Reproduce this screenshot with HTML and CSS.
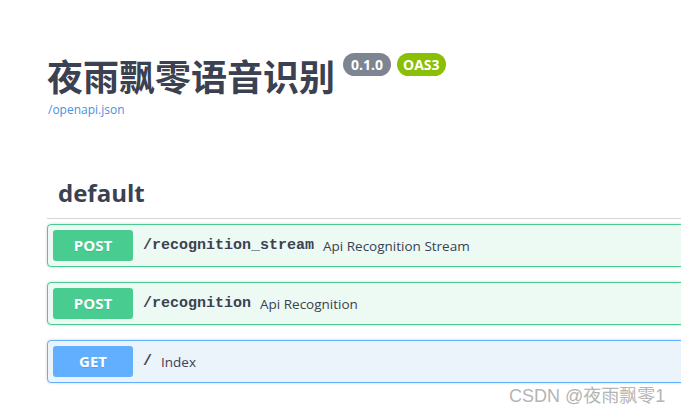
FILE: index.html
```html
<!DOCTYPE html>
<html lang="zh">
<head>
<meta charset="utf-8">
<title>夜雨飘零语音识别</title>
<link rel="stylesheet" href="styles.css">
</head>
<body>
<div class="page">
  <div class="info">
    <div class="title-row">
      <h2 class="title">夜雨飘零语音识别</h2>
      <span class="badge badge-version">0.1.0</span>
      <span class="badge badge-oas">OAS3</span>
    </div>
    <a class="spec-link" href="#">/openapi.json</a>
  </div>

  <div class="tag-section">
    <h3 class="tag">default</h3>
    <div class="ops">
      <div class="opblock opblock-post">
        <span class="method">POST</span>
        <span class="path">/recognition_stream</span>
        <span class="desc">Api Recognition Stream</span>
      </div>
      <div class="opblock opblock-post">
        <span class="method">POST</span>
        <span class="path">/recognition</span>
        <span class="desc">Api Recognition</span>
      </div>
      <div class="opblock opblock-get">
        <span class="method">GET</span>
        <span class="path">/</span>
        <span class="desc">Index</span>
      </div>
    </div>
  </div>
</div>
<div class="watermark">CSDN @夜雨飘零1</div>
</body>
</html>
```

FILE: styles.css
```css
html, body {
  margin: 0;
  padding: 0;
  background: #ffffff;
  overflow: hidden;
}

body {
  width: 681px;
  height: 415px;
  position: relative;
  font-family: "Open Sans", "Noto Sans", "Noto Sans CJK SC", sans-serif;
  color: #3b4151;
}

.page {
  width: 760px;
  padding: 0 0 0 47px;
}

.info {
  padding-top: 50px;
}

.title-row {
  display: flex;
  align-items: flex-start;
  gap: 6px;
}

.title {
  margin: 0 2px 0 0;
  font-family: "Noto Sans CJK SC", "Noto Sans", sans-serif;
  font-weight: 700;
  font-size: 36px;
  line-height: 50px;
  color: #3b4151;
}

.badge {
  margin-top: 3px;
  display: inline-block;
  height: 23px;
  line-height: 23px;
  padding: 0 8px;
  border-radius: 12px;
  color: #ffffff;
  font-family: "Open Sans", "Noto Sans", sans-serif;
  font-weight: 700;
  font-size: 14px;
}

.badge-version {
  background: #7d8492;
}

.badge-oas {
  background: #89bf04;
  padding: 0 6px;
}

.spec-link {
  display: block;
  margin-top: 2px;
  margin-left: 1px;
  font-size: 12px;
  line-height: 16px;
  color: #4990e2;
  text-decoration: none;
}

.tag-section {
  margin-top: 58px;
}

.tag {
  margin: 0;
  padding: 0 0 8px 11px;
  font-family: "Open Sans", "Noto Sans", sans-serif;
  font-weight: 700;
  font-size: 24px;
  line-height: 34px;
  color: #3b4151;
  border-bottom: 1px solid #d3d5da;
}

.ops {
  display: flex;
  flex-direction: column;
  gap: 15px;
  padding-top: 5px;
}

.opblock {
  display: flex;
  align-items: center;
  height: 41px;
  padding: 0 5px;
  border: 1px solid;
  border-radius: 4px;
  box-shadow: 0 0 3px rgba(0, 0, 0, 0.19);
}

.opblock-post {
  border-color: #49cc90;
  background: #ecfaf3;
}

.opblock-get {
  border-color: #61affe;
  background: #ebf3fb;
}

.method {
  display: inline-block;
  width: 80px;
  height: 31px;
  line-height: 31px;
  text-align: center;
  border-radius: 3px;
  color: #ffffff;
  font-family: "Open Sans", "Noto Sans", sans-serif;
  font-weight: 700;
  font-size: 15px;
  text-shadow: 0 1px 0 rgba(0, 0, 0, 0.1);
}

.opblock-post .method {
  background: #49cc90;
}

.opblock-get .method {
  background: #61affe;
}

.path {
  padding: 0 9px 0 10px;
  font-family: "Liberation Mono", "DejaVu Sans Mono", monospace;
  font-weight: 700;
  font-size: 15px;
  color: #3b4151;
}

.desc {
  font-family: "Open Sans", "Noto Sans", sans-serif;
  font-size: 13.5px;
  color: #3b4151;
}

.watermark {
  position: absolute;
  left: 509px;
  top: 385px;
  font-family: "Liberation Sans", "Noto Sans CJK SC", sans-serif;
  font-size: 18px;
  line-height: 22px;
  color: #b4b4b4;
  text-shadow: 0 0 2px #ffffff;
}
```
